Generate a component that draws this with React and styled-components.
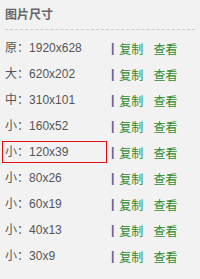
import React from 'react'
import styled, { createGlobalStyle } from 'styled-components'

const sizes = [
  ['原', '1920x628'],
  ['大', '620x202'],
  ['中', '310x101'],
  ['小', '160x52'],
  ['小', '120x39', true],
  ['小', '80x26'],
  ['小', '60x19'],
  ['小', '40x13'],
  ['小', '30x9'],
]

const App = () => {
  return (
    <>
      <Global />
      <Panel>
        <Title>图片尺寸</Title>
        <List>
          {sizes.map(([name, dim, active], i) => (
            <Row key={i}>
              <Label $active={active}>
                {name}：{dim}
              </Label>
              <Sep>|</Sep>
              <Link>复制</Link>
              <Link $gap>查看</Link>
            </Row>
          ))}
        </List>
      </Panel>
    </>
  )
}

export default App

const Global = createGlobalStyle`
html, body {
  margin: 0;
  padding: 0;
  background: #f2f2f2;
}
`

const Panel = styled.div`
width: 200px;
height: 279px;
background: #f2f2f2;
font-family: Arial, "Liberation Sans", "Noto Sans CJK SC", sans-serif;
font-size: 12px;
color: #555;
`

const Title = styled.div`
margin: 0 5px;
height: 29px;
line-height: 30px;
font-weight: bold;
color: #666;
border-bottom: 1px dashed #ccc;
`

const List = styled.div`
padding-top: 5px;
`

const Row = styled.div`
display: flex;
align-items: center;
height: 26px;
`

const Label = styled.div`
box-sizing: border-box;
width: 105px;
height: 22px;
margin-left: 2px;
padding-left: 2px;
line-height: 21px;
border: 1px solid ${p => (p.$active ? '#e01010' : 'transparent')};
color: #555;
`

const Sep = styled.span`
margin-left: 4px;
color: #55609a;
font-weight: bold;
`

const Link = styled.span`
margin-left: ${p => (p.$gap ? '10px' : '5px')};
color: #2e8b2e;
`
